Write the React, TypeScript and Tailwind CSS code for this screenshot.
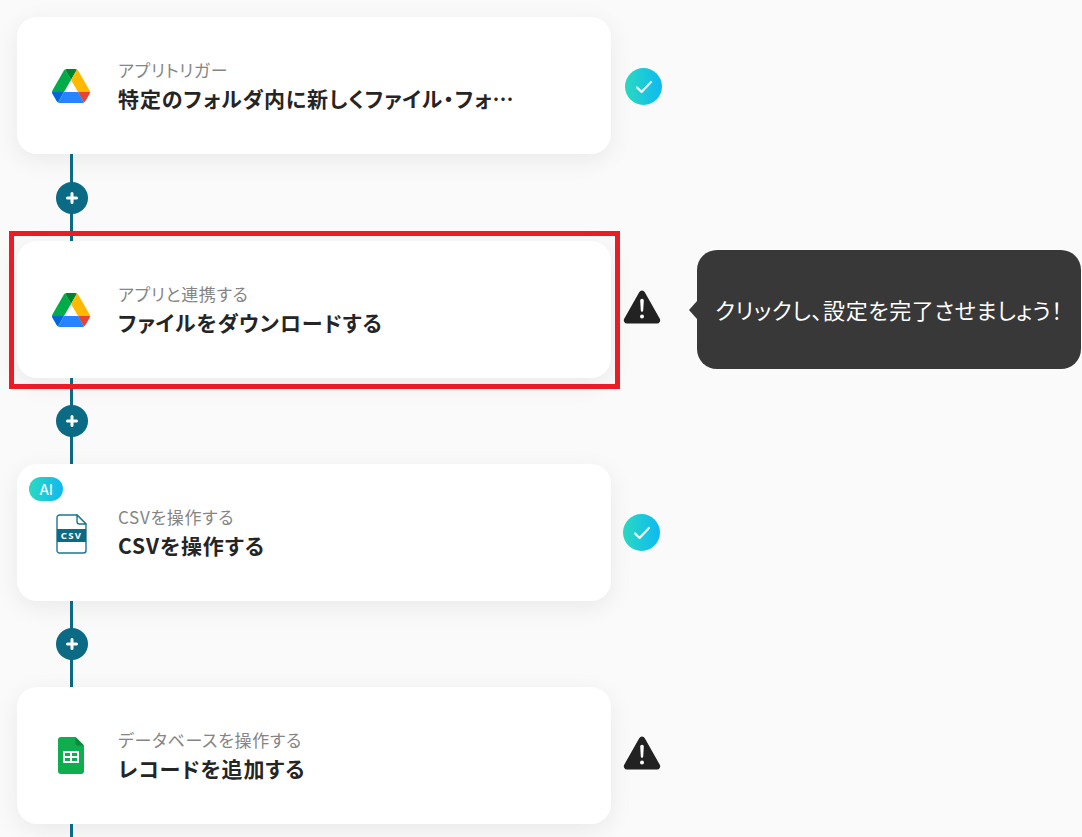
import type { ReactNode } from "react";

function DriveIcon() {
  return (
    <svg viewBox="0 0 87.3 78" className="h-[34px] w-[38px]">
      <path d="m6.6 66.85 3.85 6.65c.8 1.4 1.95 2.5 3.3 3.3l13.75-23.8h-27.5c0 1.55.4 3.1 1.2 4.5z" fill="#0066da" />
      <path d="m43.65 25-13.75-23.8c-1.35.8-2.5 1.9-3.3 3.3l-25.4 44a9.06 9.06 0 0 0 -1.2 4.5h27.5z" fill="#00ac47" />
      <path d="m73.55 76.8c1.35-.8 2.5-1.9 3.3-3.3l1.6-2.75 7.65-13.25c.8-1.4 1.2-2.95 1.2-4.5h-27.502l5.852 11.5z" fill="#ea4335" />
      <path d="m43.65 25 13.75-23.8c-1.35-.8-2.9-1.2-4.5-1.2h-18.5c-1.6 0-3.15.45-4.5 1.2z" fill="#00832d" />
      <path d="m59.8 53h-32.3l-13.75 23.8c1.35.8 2.9 1.2 4.5 1.2h50.8c1.6 0 3.15-.45 4.5-1.2z" fill="#2684fc" />
      <path d="m73.4 26.5-12.7-22c-.8-1.4-1.95-2.5-3.3-3.3l-13.75 23.8 16.15 28h27.45c0-1.55-.4-3.1-1.2-4.5z" fill="#ffba00" />
    </svg>
  );
}

function CsvIcon() {
  return (
    <svg viewBox="0 0 31 40" className="mt-[2px] h-10 w-[31px]">
      <path d="M3.5 1h17.5L30 10v26.5a2.5 2.5 0 0 1-2.5 2.5H3.5A2.5 2.5 0 0 1 1 36.5v-33A2.5 2.5 0 0 1 3.5 1z" fill="#fff" stroke="#1d7690" strokeWidth="1.4" />
      <path d="M21 1v6.5A2.5 2.5 0 0 0 23.5 10H30z" fill="#fff" stroke="#1d7690" strokeWidth="1.4" strokeLinejoin="round" />
      <rect x="1" y="15" width="29" height="13" fill="#0b6a84" />
      <text x="15.5" y="25" textAnchor="middle" fill="#fff" fontSize="9.5" fontWeight="700" letterSpacing="1.4" fontFamily="'Noto Sans', sans-serif">CSV</text>
    </svg>
  );
}

function SheetsIcon() {
  return (
    <svg viewBox="0 0 26 37" className="h-[37px] w-[26px]">
      <path d="M3 0h14.5L26 8.5V34a3 3 0 0 1-3 3H3a3 3 0 0 1-3-3V3a3 3 0 0 1 3-3z" fill="#0ead4e" />
      <path d="M17.5 0 26 8.5h-6.5a2 2 0 0 1-2-2z" fill="#0a8a3c" />
      <path d="M5 14h16v12H5zM7 16v3h5v-3zm7 0v3h5v-3zm-7 5v3h5v-3zm7 0v3h5v-3z" fill="#fff" fillRule="evenodd" />
    </svg>
  );
}

function CheckBadge() {
  return (
    <div className="flex h-[37px] w-[37px] items-center justify-center rounded-full bg-gradient-to-r from-[#2bd9bf] to-[#12b8f2]">
      <svg viewBox="0 0 24 24" className="h-6 w-6" fill="none" stroke="#fff" strokeWidth="2.2" strokeLinecap="round" strokeLinejoin="round">
        <path d="M5 12.5l4.6 4.5L19 7" />
      </svg>
    </div>
  );
}

function WarnBadge() {
  return (
    <svg viewBox="0 0 38 34" className="h-[34px] w-[38px]">
      <path d="M16.2 2.2a3.2 3.2 0 0 1 5.6 0l15 26.6a3.2 3.2 0 0 1-2.8 4.7H4a3.2 3.2 0 0 1-2.8-4.7z" fill="#222" />
      <path d="M17.2 10.5a1.8 1.8 0 0 1 3.6 0l-.6 10a1.2 1.2 0 0 1-2.4 0z" fill="#fff" />
      <circle cx="19" cy="26.5" r="2" fill="#fff" />
    </svg>
  );
}

function Connector({ className }: { className: string }) {
  return (
    <div className={`relative ml-[53px] w-[3px] bg-[#0b6a84] ${className}`}>
      <div className="absolute left-1/2 top-1/2 flex h-8 w-8 -translate-x-1/2 -translate-y-1/2 items-center justify-center rounded-full bg-[#0b6a84]">
        <svg viewBox="0 0 16 16" className="h-4 w-4" fill="none" stroke="#fff" strokeWidth="3" strokeLinecap="round">
          <path d="M8 3.5v9M3.5 8h9" />
        </svg>
      </div>
    </div>
  );
}

function StepCard({ icon, label, title, badge, status, statusClass }: {
  icon: ReactNode;
  label: string;
  title: string;
  badge?: boolean;
  status: ReactNode;
  statusClass: string;
}) {
  return (
    <div className="flex items-center">
      <div className="relative flex h-[137px] w-[594px] items-center rounded-[20px] bg-white pl-[34px] shadow-[0_6px_24px_rgba(0,0,0,0.07)]">
        {badge && (
          <div className="absolute left-3 top-[13px] flex h-6 w-[34px] items-center justify-center rounded-full bg-gradient-to-r from-[#2bd9bf] to-[#12b8f2] font-['Inter',sans-serif] text-[14px] font-medium text-white">
            AI
          </div>
        )}
        <div className="flex w-[40px] justify-center">{icon}</div>
        <div className="ml-[27px] min-w-0 pt-[1px]">
          <div className="text-[17px] leading-6 tracking-[0.7px] text-[#858585] [font-feature-settings:'palt']">{label}</div>
          <div className="w-[402px] truncate text-[21px] font-bold leading-[32px] tracking-[0.9px] text-[#252525] [font-feature-settings:'palt']">{title}</div>
        </div>
      </div>
      <div className={statusClass}>{status}</div>
    </div>
  );
}

export default function App() {
  return (
    <div className="relative h-[837px] overflow-hidden bg-[#fafafa] pl-[17px] pt-[17px] font-['Noto_Sans_CJK_JP','Noto_Sans',sans-serif]">
      <StepCard icon={<DriveIcon />} label="アプリトリガー" title="特定のフォルダ内に新しくファイル・フォルダが作成されたら" status={<CheckBadge />} statusClass="ml-[14px] mt-[2px]" />
      <Connector className="h-[87px]" />
      <StepCard icon={<DriveIcon />} label="アプリと連携する" title="ファイルをダウンロードする" status={<WarnBadge />} statusClass="ml-3 mb-[6px]" />
      <Connector className="h-[86px]" />
      <StepCard badge icon={<CsvIcon />} label="CSVを操作する" title="CSVを操作する" status={<CheckBadge />} statusClass="ml-3" />
      <Connector className="h-[86px]" />
      <StepCard icon={<SheetsIcon />} label="データベースを操作する" title="レコードを追加する" status={<WarnBadge />} statusClass="ml-3 mb-[6px]" />
      <Connector className="h-[86px]" />

      {/* red highlight over the second step */}
      <div className="pointer-events-none absolute left-[9px] top-[231px] h-[158px] w-[611px] border-[5px] border-[#ed1c24]" />

      {/* tooltip */}
      <div className="absolute left-[697px] top-[250px] flex h-[119px] w-[384px] items-center justify-center rounded-[20px] bg-[#383838] text-[22px] tracking-[0.6px] text-white [font-feature-settings:'palt']">
        <div className="absolute -left-[8px] top-1/2 h-0 w-0 -translate-y-1/2 border-y-[9px] border-r-[8px] border-y-transparent border-r-[#383838]" />
        クリックし、設定を完了させましょう！
      </div>
    </div>
  );
}
